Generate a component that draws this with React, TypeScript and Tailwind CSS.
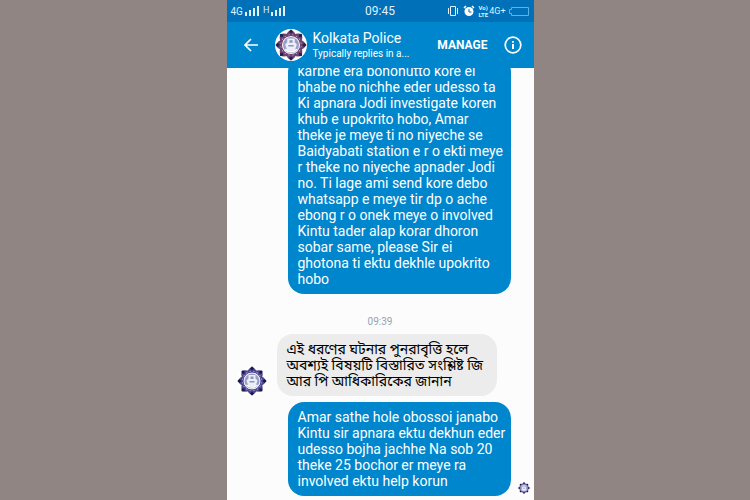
import type { ReactNode } from 'react';

type EmblemProps = {
  className: string;
  rim: string;
  petal: string;
};

function Emblem({ className, rim, petal }: EmblemProps) {
  const petals = [0, 45, 90, 135, 180, 225, 270, 315];

  return (
    <svg viewBox="0 0 60 60" className={className} aria-hidden="true">
      <circle cx="30" cy="30" r="30" fill="#fff" />
      {petals.map((angle) => (
        <g key={angle} transform={`rotate(${angle} 30 30)`}>
          <path d="M30 1 Q38 6 40 12 L36 18 H24 L20 12 Q22 6 30 1 Z" fill={petal} />
          <path d="M30 1 L34 5 L30 9 L26 5 Z" fill={rim} />
          <path d="M24 12 L27 10 L28 14 Z M36 12 L33 10 L32 14 Z" fill="#dcd9ee" />
        </g>
      ))}
      <circle cx="30" cy="30" r="18" fill="#f4f3fb" stroke={petal} strokeWidth="2" />
      <circle cx="30" cy="30" r="15" fill="#9a9dc6" />
      <path d="M23 18 H37 V25 L41 29 L37 41 H23 L19 29 L23 25 Z" fill="#eceef8" />
      <path d="M27 21 H33 V26 H27 Z M25 30 H35 V33 H25 Z" fill="#8f93bd" />
      <path d="M19 38 Q30 47 41 38" fill="none" stroke="#fff" strokeWidth="3" />
    </svg>
  );
}

function SignalBars() {
  return (
    <svg viewBox="0 0 14 10" className="h-2.5 w-3.5" fill="currentColor" aria-hidden="true">
      <path d="M0 6h2v4H0z M4 4h2v6H4z M8 2h2v8H8z M12 0h2v10h-2z" />
    </svg>
  );
}

function StatusBar() {
  return (
    <div className="grid h-[22px] shrink-0 grid-cols-3 items-center bg-[#0070b8] px-1 text-[10px] text-sky-100">
      <div className="flex items-center gap-0.5">
        <span>4G</span>
        <SignalBars />
        <span className="ml-0.5 text-[9px]">H</span>
        <SignalBars />
      </div>
      <span className="text-center text-xs">09:45</span>
      <div className="flex items-center justify-end gap-1">
        <svg viewBox="0 0 12 10" className="h-2.5 w-3 shrink-0" fill="none" stroke="currentColor" aria-hidden="true">
          <path d="M3.5.5h5v9h-5z M1.5 2v6 M10.5 2v6" />
        </svg>
        <svg viewBox="0 0 12 12" className="size-3 shrink-0" aria-hidden="true">
          <circle cx="6" cy="6.5" r="4.5" fill="#fff" />
          <path d="M1 3l2-2 M11 3L9 1" stroke="#fff" strokeWidth="1.5" />
          <path d="M6 4v3h2.5" fill="none" stroke="#0070b8" />
        </svg>
        <div className="flex items-center gap-px">
          <div className="flex flex-col text-[6px] leading-[7px] font-bold">
            <span>Vo)</span>
            <span>LTE</span>
          </div>
          <span className="text-[9px] leading-3">4G+</span>
        </div>
        <svg viewBox="0 0 20 9" className="h-[9px] w-5 shrink-0" fill="none" stroke="#5ab4e4" aria-hidden="true">
          <path d="M2.5.5h17v8h-17v-2h-2v-4h2z" />
        </svg>
      </div>
    </div>
  );
}

function ChatHeader() {
  return (
    <header className="flex h-[46px] shrink-0 items-center bg-[#0086cc] pr-3 pl-4 text-white">
      <button type="button" aria-label="Back" className="shrink-0">
        <svg viewBox="0 0 16 16" className="size-4" fill="none" stroke="currentColor" strokeWidth="1.7">
          <path d="M15 8H2 M8 2L2 8l6 6" />
        </svg>
      </button>
      <Emblem className="ml-4 size-8 shrink-0" rim="#2a2050" petal="#6b4370" />
      <div className="ml-1.5 min-w-0 flex-1 pt-0.5 whitespace-nowrap">
        <h1 className="text-sm leading-4">Kolkata Police</h1>
        <p className="text-[10px] leading-4">Typically replies in a...</p>
      </div>
      <button type="button" className="ml-2 text-xs font-bold">
        MANAGE
      </button>
      <button type="button" aria-label="Info" className="ml-4 shrink-0">
        <svg viewBox="0 0 18 18" className="size-[18px]" fill="none" stroke="currentColor" strokeWidth="1.7">
          <circle cx="9" cy="9" r="7.8" />
          <path d="M9 8v5 M9 5v1.7" strokeWidth="2" />
        </svg>
      </button>
    </header>
  );
}

function SentMessage({ children }: { children: ReactNode }) {
  return (
    <p className="ml-[61px] w-[223px] rounded-2xl bg-[#0086cc] py-[7px] pr-1 pl-2.5 text-sm leading-4 whitespace-pre-line text-white">
      {children}
    </p>
  );
}

const FIRST_MESSAGE = `karbhe era bonohutto kore ei
bhabe no nichhe eder udesso ta
Ki apnara Jodi investigate koren
khub e upokrito hobo, Amar
theke je meye ti no niyeche se
Baidyabati station e r o ekti meye
r theke no niyeche apnader Jodi
no. Ti lage ami send kore debo
whatsapp e meye tir dp o ache
ebong r o onek meye o involved
Kintu tader alap korar dhoron
sobar same, please Sir ei
ghotona ti ektu dekhle upokrito
hobo`;

const REPLY = `এই ধরণের ঘটনার পুনরাবৃত্তি হলে
অবশ্যই বিষয়টি বিস্তারিত সংশ্লিষ্ট জি
আর পি আধিকারিকের জানান`;

const LAST_MESSAGE = `Amar sathe hole obossoi janabo
Kintu sir apnara ektu dekhun eder
udesso bojha jachhe Na sob 20
theke 25 bochor er meye ra
involved ektu help korun`;

export default function App() {
  return (
    <div className="flex h-screen justify-center bg-[#918583] pl-2.5 font-['Roboto','Noto_Sans_Bengali',sans-serif]">
      <div className="flex w-full max-w-[307px] flex-col bg-[#fcfcfc]">
        <StatusBar />
        <ChatHeader />
        <main className="flex min-h-0 flex-1 flex-col justify-end overflow-hidden pb-1">
          <SentMessage>{FIRST_MESSAGE}</SentMessage>
          <time className="mt-5 mb-1 text-center text-[10px] leading-4 text-gray-400">09:39</time>
          <div className="flex items-end gap-2.5 pl-2.5">
            <Emblem className="size-[30px] shrink-0" rim="#1d1748" petal="#4d4790" />
            <p className="w-[220px] rounded-2xl bg-[#ececec] px-2.5 py-[7px] text-sm leading-4 whitespace-pre-line text-black">
              {REPLY}
            </p>
          </div>
          <div className="mt-1.5 flex items-end justify-between pr-1">
            <SentMessage>{LAST_MESSAGE}</SentMessage>
            <Emblem className="mb-0.5 size-3" rim="#1d1748" petal="#4d4790" />
          </div>
        </main>
      </div>
    </div>
  );
}
